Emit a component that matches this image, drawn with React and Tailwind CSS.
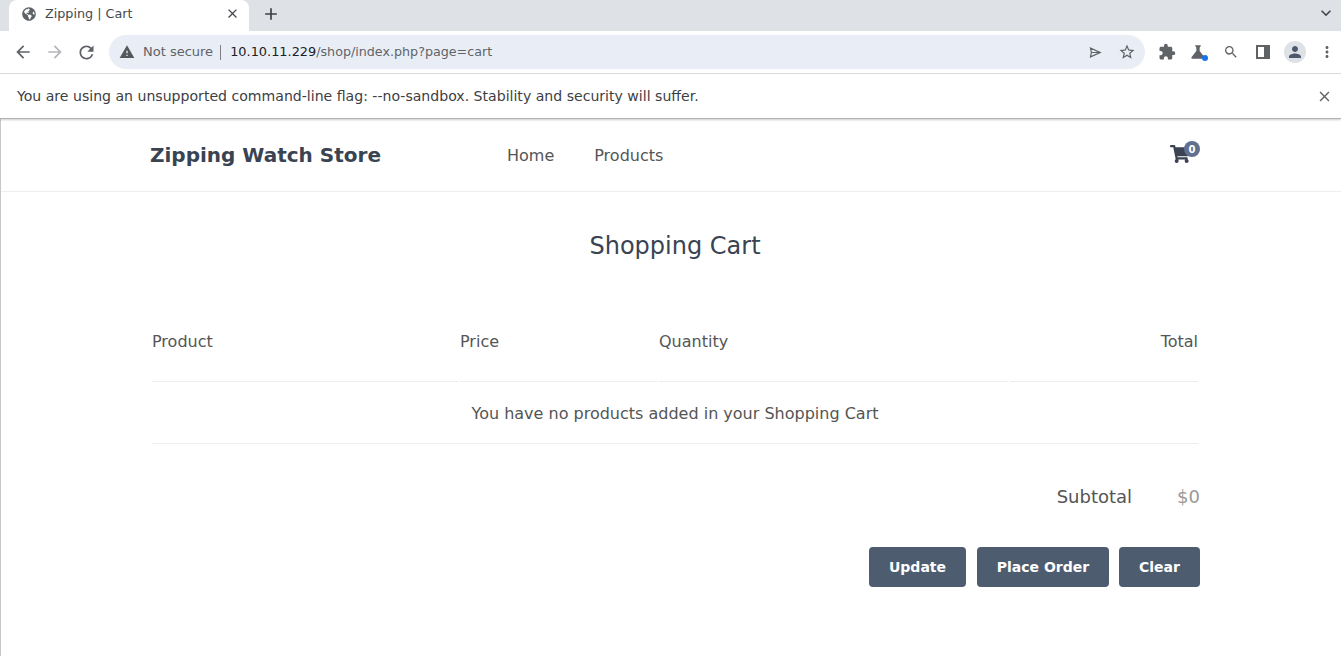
import { FaGlobeAmericas, FaShoppingCart } from "react-icons/fa";
import {
  MdAdd,
  MdArrowBack,
  MdArrowForward,
  MdClose,
  MdExpandMore,
  MdExtension,
  MdMoreVert,
  MdPerson,
  MdRefresh,
  MdScience,
  MdSearch,
  MdStarBorder,
  MdWarning,
} from "react-icons/md";

function TabStrip() {
  return (
    <div className="h-[31px] bg-[#dee1e6] flex items-start pl-[9px] pr-[5px] text-[#3c4043]">
      <div className="w-[240px] h-[31px] bg-white rounded-t-lg flex items-center pl-[13px] pr-[9px] pb-[4px]">
        <FaGlobeAmericas className="w-[14px] h-[14px] text-[#5f6368]" />
        <span className="ml-[9px] text-[12.75px] text-[#45494d]">Zipping | Cart</span>
        <MdClose className="ml-auto w-[15px] h-[15px] text-[#45494d]" />
      </div>
      <div className="flex-1 flex items-center h-[27px]">
        <MdAdd className="ml-[12px] w-[20px] h-[20px] text-[#3c4043]" />
      </div>
      <MdExpandMore className="w-[20px] h-[20px] mt-[3px] text-[#45494d]" />
    </div>
  );
}

function Toolbar() {
  return (
    <div className="h-[43px] bg-white border-b border-[#dadce0] flex items-center pl-[13px] text-[#5f6368]">
      <MdArrowBack className="w-[20px] h-[20px]" />
      <MdArrowForward className="w-[20px] h-[20px] ml-[12px] text-[#b4b6b9]" />
      <MdRefresh className="w-[21px] h-[21px] ml-[11px]" />
      <div className="ml-[12px] w-[1036px] h-[34px] rounded-full bg-[#e9eef6] flex items-center pl-[10px] pr-[9px] text-[13px]">
        <MdWarning className="w-[16px] h-[16px] text-[#54575b]" />
        <span className="ml-[8px] text-[#5f6368]">Not secure</span>
        <span className="ml-[7px] w-px h-[15px] bg-[#7d8085]" />
        <span className="ml-[9px] text-[#202124]">
          <span className="text-[12.9px]">10.10.11.229</span>
          <span className="text-[12.7px] text-[#5f6368]">/shop/index.php?page=cart</span>
        </span>
        <svg viewBox="0 0 14 12" className="ml-auto mr-[2px] w-[13px] h-[11px]" fill="none" stroke="#5f6368" strokeWidth="1.3">
          <path d="M1.5 1.2 12.2 6 1.5 10.8l1-4.8z M2.5 6h9" />
        </svg>
        <MdStarBorder className="ml-[14px] w-[18px] h-[18px]" />
      </div>
      <MdExtension className="ml-[13px] w-[18px] h-[18px]" />
      <div className="relative ml-[12px] w-[20px] h-[20px]">
        <MdScience className="w-[20px] h-[20px]" />
        <span className="absolute right-0 bottom-[1px] w-[6px] h-[6px] rounded-full bg-[#1a73e8]" />
      </div>
      <MdSearch className="ml-[15px] w-[16px] h-[16px]" />
      <div className="ml-[17px] w-[14px] h-[14px] border-[2px] border-[#5f6368] border-r-[6px]" />
      <div className="ml-[14px] w-[22px] h-[22px] rounded-full bg-[#dee1e6] flex items-center justify-center">
        <MdPerson className="w-[18px] h-[18px] text-[#4d5a6d]" />
      </div>
      <MdMoreVert className="ml-[12px] w-[18px] h-[18px]" />
    </div>
  );
}

function InfoBar() {
  return (
    <div className="relative h-[45px] bg-white border-b border-[#b0b2b5] shadow-[0_1px_2px_rgba(0,0,0,0.2)] flex items-center pl-[17px] pr-[8px] text-[14.08px] text-[#3c4043]">
      <span className="mt-[2px]">You are using an unsupported command-line flag: --no-sandbox. Stability and security will suffer.</span>
      <MdClose className="ml-auto w-[17px] h-[17px] text-[#5f6368]" />
    </div>
  );
}

function SiteHeader() {
  return (
    <header className="h-[73px] border-b border-[#edeef0] flex items-center pl-[149px]">
      <div className="w-[1050px] flex items-center text-[#394352]">
        <h1 className="w-[357px] text-[20px] font-bold">Zipping Watch Store</h1>
        <nav className="flex gap-[40px] text-[16px] text-[#555555] mt-[1px]">
          <a>Home</a>
          <a>Products</a>
        </nav>
        <div className="relative ml-auto mr-[10px] -mt-[2px]">
          <FaShoppingCart className="w-[20px] h-[18px] text-[#394352]" />
          <span className="absolute -top-[4px] -right-[10px] w-[16px] h-[16px] rounded-full bg-[#5f7090] text-white text-[10px] font-bold flex items-center justify-center">
            0
          </span>
        </div>
      </div>
    </header>
  );
}

function CartTable() {
  return (
    <table className="w-[1050px] mt-[46px] border-separate border-spacing-[2px] table-fixed text-[16px] text-[#555555]">
      <colgroup>
        <col className="w-[306px]" />
        <col className="w-[197px]" />
        <col className="w-[349px]" />
        <col />
      </colgroup>
      <thead>
        <tr>
          <td className="h-[70px] pb-[10px] border-b border-[#edeef0] align-middle">Product</td>
          <td className="pb-[10px] border-b border-[#edeef0] align-middle">Price</td>
          <td className="pb-[10px] border-b border-[#edeef0] align-middle">Quantity</td>
          <td className="pb-[10px] border-b border-[#edeef0] align-middle text-right">Total</td>
        </tr>
      </thead>
      <tbody>
        <tr>
          <td colSpan={4} className="h-[60px] border-b border-[#edeef0] text-center">
            You have no products added in your Shopping Cart
          </td>
        </tr>
      </tbody>
    </table>
  );
}

function CartButton({ label, width }) {
  return (
    <button className={`${width} h-[40px] rounded bg-[#4e5c70] text-white text-[14px] font-bold`}>
      {label}
    </button>
  );
}

export default function App() {
  return (
    <div className="w-[1341px] h-[656px] overflow-hidden bg-white font-['DejaVu_Sans',sans-serif]">
      <TabStrip />
      <Toolbar />
      <InfoBar />
      <main className="border-l border-[#c5c7ca] h-[537px]">
        <SiteHeader />
        <div className="ml-[149px] w-[1050px] flex flex-col items-center">
          <h2 className="mt-[36px] text-[24px] leading-[36px] text-[#394352]">Shopping Cart</h2>
          <CartTable />
          <div className="w-full mt-[37px] flex justify-end items-center text-[18px] leading-[27px]">
            <span className="text-[#555555]">Subtotal</span>
            <span className="ml-[45px] text-[#999]">$0</span>
          </div>
          <div className="w-full mt-[37px] flex justify-end gap-[10px]">
            <div className="mr-px">
              <CartButton label="Update" width="w-[97px]" />
            </div>
            <CartButton label="Place Order" width="w-[132px]" />
            <CartButton label="Clear" width="w-[81px]" />
          </div>
        </div>
      </main>
    </div>
  );
}
